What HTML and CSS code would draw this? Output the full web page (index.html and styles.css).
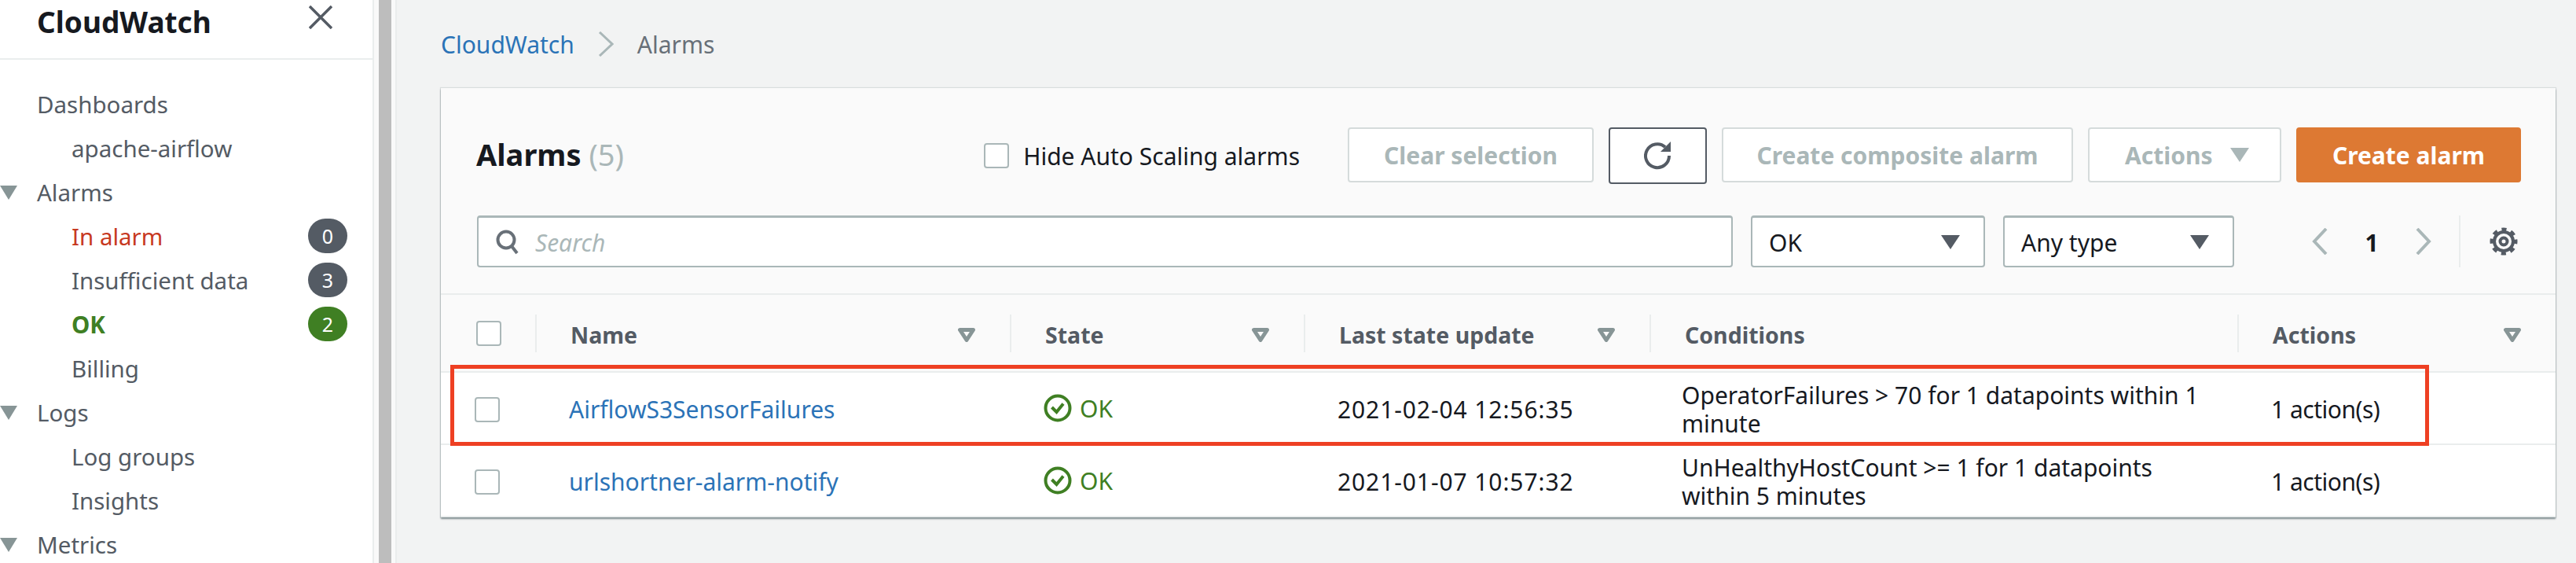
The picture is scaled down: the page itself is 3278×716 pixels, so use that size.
FILE: index.html
```html
<!DOCTYPE html>
<html lang="en">
  <head>
    <meta charset="UTF-8" />
    <title>CloudWatch Alarms</title>
    <link rel="stylesheet" href="styles.css">
  </head>
  <body>
    <aside class="sidebar">
      <div class="side-head">
        <h2>CloudWatch</h2>
        <svg class="close" viewBox="0 0 30 30"><path d="M1 1L29 29M29 1L1 29" /></svg>
      </div>
      <nav class="side-nav">
        <a class="nav-item top">Dashboards</a>
        <a class="nav-item sub">apache-airflow</a>
        <a class="nav-item top"><i class="tri"></i>Alarms</a>
        <a class="nav-item sub red">In alarm<span class="badge">0</span></a>
        <a class="nav-item sub">Insufficient data<span class="badge">3</span></a>
        <a class="nav-item sub green">OK<span class="badge ok">2</span></a>
        <a class="nav-item sub">Billing</a>
        <a class="nav-item top"><i class="tri"></i>Logs</a>
        <a class="nav-item sub">Log groups</a>
        <a class="nav-item sub">Insights</a>
        <a class="nav-item top"><i class="tri"></i>Metrics</a>
      </nav>
    </aside>
    <div class="gutter"><div class="scroll-thumb"></div></div>
    <main>
      <div class="crumbs">
        <a class="link">CloudWatch</a>
        <svg class="crumb-sep" viewBox="0 0 20 32"><path d="M2 1L18 16L2 31" /></svg>
        <span>Alarms</span>
      </div>
      <section class="card">
        <div class="card-head">
          <div class="head-row">
            <h1>Alarms <span class="count">(5)</span></h1>
            <label class="hide-check"><span class="box"></span>Hide Auto Scaling alarms</label>
            <button class="btn w-clear">Clear selection</button>
            <button class="btn refresh">
              <svg viewBox="0 0 36 36"><path class="arc" d="M27 7A15 15 0 1 0 32 18" /><path class="head" d="M34 0V13H21Z" /></svg>
            </button>
            <button class="btn w-composite">Create composite alarm</button>
            <button class="btn w-actions">Actions<i class="caret light"></i></button>
            <button class="btn primary">Create alarm</button>
          </div>
          <div class="filter-row">
            <div class="search">
              <svg viewBox="0 0 30 32"><circle cx="13" cy="13" r="10.5" /><path d="M20 21L27 30" /></svg>
              <span class="lift">Search</span>
            </div>
            <div class="select w-ok"><span class="lift">OK</span><i class="caret"></i></div>
            <div class="select w-any"><span class="lift">Any type</span><i class="caret"></i></div>
            <div class="pager">
              <svg class="chev" viewBox="0 0 20 34"><path d="M18 1L3 17L18 33" /></svg>
              <b>1</b>
              <svg class="chev" viewBox="0 0 20 34"><path d="M2 1L17 17L2 33" /></svg>
              <div class="pager-sep">
                <svg class="gear" viewBox="0 0 36 36">
                  <circle class="teeth" cx="18" cy="18" r="15" />
                  <circle cx="18" cy="18" r="12" />
                  <circle cx="18" cy="18" r="4.5" />
                </svg>
              </div>
            </div>
          </div>
        </div>

        <div class="alarm-table">
          <div class="row thead">
            <div class="cell chk"><span class="box"></span></div>
            <div class="cell">Name<svg class="sort" viewBox="0 0 22 18"><path d="M2.5 2.5H19.5L11 15.5Z" /></svg></div>
            <div class="cell">State<svg class="sort" viewBox="0 0 22 18"><path d="M2.5 2.5H19.5L11 15.5Z" /></svg></div>
            <div class="cell">Last state update<svg class="sort" viewBox="0 0 22 18"><path d="M2.5 2.5H19.5L11 15.5Z" /></svg></div>
            <div class="cell">Conditions</div>
            <div class="cell">Actions<svg class="sort" viewBox="0 0 22 18"><path d="M2.5 2.5H19.5L11 15.5Z" /></svg></div>
          </div>
          <div class="row tbody">
            <div class="cell chk"><span class="box"></span></div>
            <div class="cell"><a class="link">AirflowS3SensorFailures</a></div>
            <div class="cell state"><svg viewBox="0 0 36 36"><circle cx="18" cy="18" r="15.5" /><path d="M10.5 17L16.5 23L25 12.5" /></svg>OK</div>
            <div class="cell date">2021-02-04 12:56:35</div>
            <div class="cell cond">OperatorFailures &gt; 70 for 1 datapoints within 1 minute</div>
            <div class="cell count-cell">1 action(s)</div>
          </div>
          <div class="row tbody">
            <div class="cell chk"><span class="box"></span></div>
            <div class="cell"><a class="link">urlshortner-alarm-notify</a></div>
            <div class="cell state"><svg viewBox="0 0 36 36"><circle cx="18" cy="18" r="15.5" /><path d="M10.5 17L16.5 23L25 12.5" /></svg>OK</div>
            <div class="cell date">2021-01-07 10:57:32</div>
            <div class="cell cond">UnHealthyHostCount &gt;= 1 for 1 datapoints within 5 minutes</div>
            <div class="cell count-cell">1 action(s)</div>
          </div>
          <div class="highlight"></div>
        </div>
      </section>
    </main>
  </body>
</html>
```

FILE: styles.css
```css
* {
  box-sizing: border-box;
}
html,
body {
  margin: 0;
  height: 716px;
  overflow: hidden;
}
body {
  display: flex;
  background: #f2f3f3;
  font-family: "Noto Sans", sans-serif;
  font-size: 30px;
  color: #16191f;
}
svg {
  display: block;
  flex: none;
}

/* side navigation */
.sidebar {
  width: 476px;
  height: 716px;
  flex: none;
  background: #fff;
  border-right: 2px solid #eaeded;
  font-size: 29.5px;
}
.side-head {
  height: 76px;
  padding: 0 51px 0 47px;
  border-bottom: 2px solid #eaeded;
  display: flex;
  justify-content: space-between;
  align-items: flex-start;
}
.side-head h2 {
  margin: 0;
  font-size: 37px;
  line-height: 56px;
  font-weight: 700;
}
.close {
  width: 30px;
  height: 30px;
  margin-top: 7px;
  fill: none;
  stroke: #545b64;
  stroke-width: 3.5;
}
.side-nav {
  padding-top: 28px;
}
.nav-item {
  height: 56px;
  display: flex;
  align-items: center;
  position: relative;
  color: #545b64;
}
.top {
  padding-left: 47px;
}
.sub {
  padding-left: 91px;
  padding-right: 32px;
}
.red {
  color: #c7391f;
}
.green {
  color: #3f7f23;
  font-weight: 700;
}
.tri {
  position: absolute;
  left: 0;
  top: 20px;
  border-style: solid;
  border-width: 18px 11px 0;
  border-color: #879596 transparent transparent;
}
.badge {
  margin-left: auto;
  width: 50px;
  height: 44px;
  border-radius: 22px;
  background: #545b64;
  color: #fff;
  font-size: 25px;
  font-weight: 400;
  display: flex;
  align-items: center;
  justify-content: center;
}
.badge.ok {
  background: #3f7f23;
}

/* scrollbar strip next to the nav */
.gutter {
  width: 29px;
  flex: none;
  padding-left: 6px;
  background: #f9f9f9;
  border-right: 2px solid #eaeded;
}
.scroll-thumb {
  width: 16px;
  height: 100%;
  background: #bdbdbd;
}

main {
  flex: 1;
  padding-left: 56px;
  padding-right: 26px;
}
.crumbs {
  height: 112px;
  display: flex;
  align-items: center;
  color: #687078;
}
.link {
  color: #2b73b7;
}
.crumb-sep {
  width: 20px;
  height: 32px;
  margin: 0 30px;
  fill: none;
  stroke: #aab7b8;
  stroke-width: 3;
}

.card {
  height: 546px;
  background: #fff;
  box-shadow: 0 2px 2px rgba(0, 28, 36, 0.45), 0 0 1px 1px rgba(0, 28, 36, 0.1);
}
.card-head {
  height: 263px;
  padding: 50px 44px 0 45px;
  background: #fafafa;
  border-bottom: 2px solid #eaeded;
}
.head-row {
  display: flex;
  align-items: center;
  height: 72px;
  gap: 19px;
}
.head-row h1 {
  margin: 0 auto 4px 0;
  font-size: 38px;
  font-weight: 700;
  line-height: 48px;
}
.count {
  font-weight: 400;
  color: #aab7b8;
}
.hide-check {
  display: flex;
  align-items: center;
  gap: 18px;
  margin-right: 42px;
}
.box {
  display: block;
  width: 32px;
  height: 32px;
  background: #fff;
  border: 2px solid #aab7b8;
  border-radius: 4px;
}
.btn {
  height: 70px;
  margin-bottom: 2px;
  padding: 0;
  background: #fff;
  border: 2px solid #d5dbdb;
  border-radius: 4px;
  color: #aab7b8;
  font: 700 30px "Noto Sans", sans-serif;
  display: flex;
  align-items: center;
  justify-content: center;
}
.w-clear {
  width: 313px;
}
.refresh {
  width: 125px;
  height: 72px;
  margin-bottom: 0;
  border-color: #545b64;
}
.refresh svg {
  width: 36px;
  height: 36px;
}
.refresh .arc {
  fill: none;
  stroke: #545b64;
  stroke-width: 4;
}
.refresh .head {
  fill: #545b64;
}
.w-composite {
  width: 447px;
}
.w-actions {
  width: 246px;
  padding-left: 45px;
  gap: 22px;
  justify-content: flex-start;
}
.primary {
  width: 286px;
  background: #dd7933;
  border-color: #dd7933;
  color: #fff;
}
.caret {
  display: block;
  border-style: solid;
  border-width: 18px 12px 0;
  border-color: #545b64 transparent transparent;
}
.caret.light {
  border-top-color: #aab7b8;
}

.filter-row {
  display: flex;
  align-items: stretch;
  gap: 23px;
  height: 66px;
  margin-top: 40px;
  margin-left: 1px;
}
.search,
.select {
  background: #fff;
  border: 2px solid #aab7b8;
  border-top-width: 3px;
  border-radius: 4px;
  display: flex;
  align-items: center;
}
.lift {
  padding-top: 2px;
}
.search {
  flex: 1;
  padding-left: 22px;
  gap: 20px;
  color: #aab7b8;
  font-style: italic;
}
.search svg {
  width: 30px;
  height: 32px;
  fill: none;
  stroke: #687078;
  stroke-width: 4;
}
.select {
  padding: 0 30px 0 21px;
  justify-content: space-between;
}
.w-ok {
  width: 298px;
}
.w-any {
  width: 294px;
}
.pager {
  width: 365px;
  margin-left: -23px;
  padding-left: 99px;
  display: flex;
  align-items: center;
}
.pager b {
  width: 112px;
  text-align: center;
  padding-top: 2px;
}
.chev {
  width: 20px;
  height: 34px;
  fill: none;
  stroke: #aab7b8;
  stroke-width: 4;
}
.pager-sep {
  height: 66px;
  margin-left: 35px;
  padding-left: 37px;
  border-left: 2px solid #eaeded;
  display: flex;
  align-items: center;
}
.gear {
  width: 36px;
  height: 36px;
  fill: none;
  stroke: #545b64;
  stroke-width: 4;
}
.gear .teeth {
  stroke-width: 5;
  stroke-dasharray: 6 5.78;
  stroke-dashoffset: 3;
}

/* alarms table */
.alarm-table {
  position: relative;
}
.row {
  display: grid;
  grid-template-columns: 120px 604px 374px 440px 748px 405px;
}
.thead {
  height: 99px;
  background: #fafafa;
  border-bottom: 2px solid #eaeded;
  padding-top: 25px;
  padding-bottom: 24px;
  color: #545b64;
  font-weight: 700;
  font-size: 28.5px;
}
.thead .cell {
  border-left: 2px solid #eaeded;
  padding: 3px 44px 0 43px;
}
.thead .cell.chk {
  border-left: none;
  padding: 0 0 0 45px;
}
.cell {
  display: flex;
  align-items: center;
  padding: 3px 43px 0;
}
.cell.chk {
  padding: 3px 0 0 43px;
}
.sort {
  width: 22px;
  height: 18px;
  margin-left: auto;
  fill: #fafafa;
  stroke: #879596;
  stroke-width: 5;
  stroke-linejoin: round;
}
.tbody {
  height: 92px;
  border-bottom: 2px solid #eaeded;
}
.tbody:last-of-type {
  border-bottom: none;
}
.cell.state {
  padding-top: 0;
  gap: 10px;
  color: #3f7f23;
}
.state svg {
  width: 36px;
  height: 36px;
  fill: none;
  stroke: #3f7f23;
  stroke-width: 4;
}
.date {
  letter-spacing: 0.9px;
}
.count-cell {
  letter-spacing: -0.5px;
}
.cond {
  padding: 3px 40px 0 41px;
  line-height: 36px;
}
.highlight {
  position: absolute;
  left: 12px;
  top: 89px;
  width: 2518px;
  height: 103px;
  border: 5px solid #ee4023;
  pointer-events: none;
}
```
